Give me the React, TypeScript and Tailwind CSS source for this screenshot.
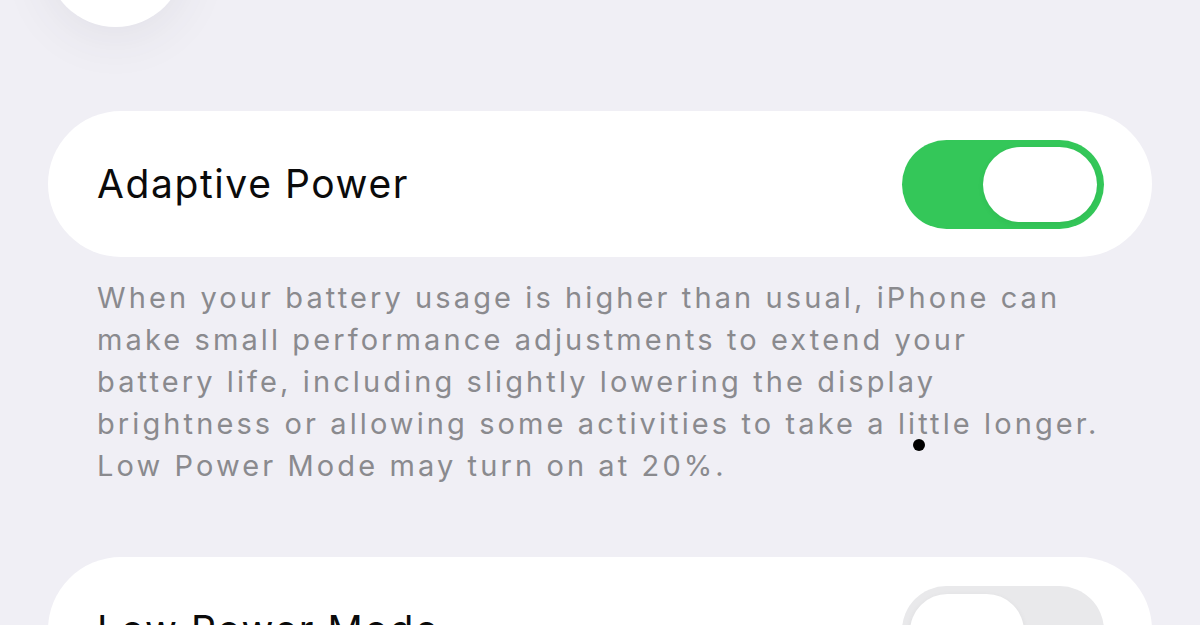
import React from "react";

function Toggle({ on }: { on: boolean }) {
    return (
        <div
            className={
                on
                    ? "w-[202px] h-[89px] rounded-full bg-[#34c759] p-[7px] flex justify-end shrink-0"
                    : "w-[202px] h-[89px] rounded-full bg-[#e9e9eb] p-[8px] flex justify-start shrink-0"
            }
        >
            <div className="w-[114px] h-[75px] rounded-full bg-white shadow-[0_2px_6px_rgba(0,0,0,0.06)]" />
        </div>
    );
}

function SettingRow({ label, on }: { label: string; on: boolean }) {
    return (
        <div className="flex items-center justify-between h-[146px] rounded-[73px] bg-white pl-[49px] pr-[48px]">
            <span className="text-[39px] text-[#0b0b0b] tracking-[1.6px]">{label}</span>
            <Toggle on={on} />
        </div>
    );
}

export default function App() {
    return (
        <div className="relative h-[625px] overflow-hidden bg-[#f0eff5] font-['Inter',sans-serif]">
            {/* floating round button peeking from above */}
            <div className="absolute top-[-112px] left-[46px] w-[139px] h-[139px] rounded-full bg-white shadow-[0_10px_50px_rgba(60,60,80,0.08)]" />

            <div className="px-12 pt-[111px]">
                <SettingRow label="Adaptive Power" on={true} />

                <p className="mt-[20px] pl-[49px] text-[29px] leading-[42px] tracking-[3.1px] text-[#8a8a8e] whitespace-nowrap">
                    When your battery usage is higher than usual, iPhone can
                    <br />
                    make small performance adjustments to extend your
                    <br />
                    battery life, including slightly lowering the display
                    <br />
                    brightness or allowing some activities to take a little longer.
                    <br />
                    Low Power Mode may turn on at 20%.
                </p>

                <div className="mt-[70px]">
                    <SettingRow label="Low Power Mode" on={false} />
                </div>
            </div>

            {/* touch indicator */}
            <div className="absolute left-[913px] top-[439px] w-[12px] h-[12px] rounded-full bg-black" />
        </div>
    );
}
